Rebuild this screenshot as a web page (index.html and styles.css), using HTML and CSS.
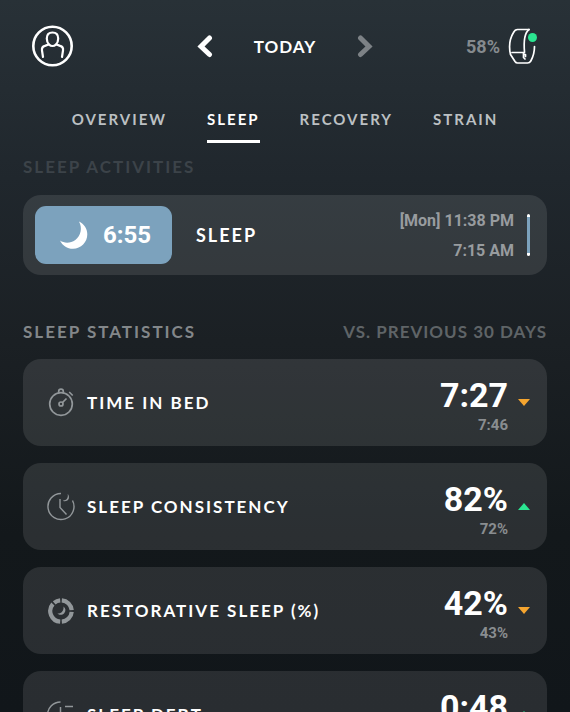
FILE: index.html
```html
<!DOCTYPE html>
<html lang="en">
<head>
  <meta charset="UTF-8" />
  <title>Sleep</title>
  <meta name="viewport" content="width=device-width, initial-scale=1.0" />
  <link rel="stylesheet" href="styles.css">
</head>
<body>

  <header class="topbar">
    <button class="icon-btn profile" aria-label="Profile">
      <svg width="42" height="42" viewBox="0 0 42 42" fill="none" stroke="#fff" stroke-linecap="round" stroke-linejoin="round">
        <circle cx="20.5" cy="21" r="19.2" stroke-width="2.6" />
        <path stroke-width="2.2" d="M20.5 7.500c-3.700 0-5.700 2.500-5.700 6 0 2.700.8 4.700 2.300 6.100 1.900 1.700 4.900 1.700 6.800 0 1.500-1.400 2.300-3.400 2.300-6.100 0-3.500-2-6-5.700-6z" />
        <path stroke-width="2.200" d="M11 32l-1-6.500c-.4-2.600.8-4 2.900-4.600l3.600-1.400M30 32l1-6.500c.4-2.600-.8-4-2.900-4.600l-3.600-1.400" />
      </svg>
    </button>

    <div class="day">
      <button class="icon-btn" aria-label="Previous day">
        <svg width="16" height="24" viewBox="0 0 16 24" fill="none" stroke="#fff" stroke-width="5" stroke-linecap="round">
          <path d="M12.500 4L4 12.500l8.500 8" />
        </svg>
      </button>
      <span class="day-name">TODAY</span>
      <button class="icon-btn" aria-label="Next day">
        <svg width="16" height="24" viewBox="0 0 16 24" fill="none" stroke="#7d8286" stroke-width="5" stroke-linecap="round">
          <path d="M3.500 4l8.500 8.500-8.500 8" />
        </svg>
      </button>
    </div>

    <div class="device">
      <span class="battery">58%</span>
      <svg width="30" height="38" viewBox="0 0 30 38" fill="none" stroke="#fff" stroke-width="1.700" stroke-linecap="round" stroke-linejoin="round">
        <path d="M21 2.500H9.500C7.500 2.500 6.500 3.500 5.500 5.500 1.500 12 .8 20 2.500 27.500L7 34.500c.7 1 1.200 1.500 2.500 1.500h10c1.500 0 2.500-.5 3.300-2 2.500-4.500 3.700-9 3.700-14.500" />
        <path d="M21 2.500c-4 3-5.500 11-4.500 22.500M4 25.500h12.500M15.500 26v4.500l1.500 1.500M16.500 27.500h1v2" />
        <circle cx="24.500" cy="10.500" r="4.500" fill="#2be591" stroke="none" />
      </svg>
    </div>
  </header>

  <nav class="tabs">
    <a class="tab" href="#overview">OVERVIEW</a>
    <a class="tab active" href="#sleep">SLEEP</a>
    <a class="tab" href="#recovery">RECOVERY</a>
    <a class="tab" href="#strain">STRAIN</a>
  </nav>

  <main class="content">
    <h2 class="section-title faded">SLEEP ACTIVITIES</h2>

    <div class="card activity">
      <div class="duration">
        <svg width="30" height="30" viewBox="0 0 30 30" fill="#fff">
          <path d="M20 1.500c5.200 2.300 8.300 7.400 8.300 12.800 0 8-6.300 14.500-14.300 14.500-5.800 0-10.700-3.200-13-8.300 4.300 3 10.500 2.900 15.300-.6 5.600-4.100 7.300-11.900 3.700-18.400z" />
        </svg>
        <span>6:55</span>
      </div>
      <span class="activity-name">SLEEP</span>
      <div class="times">
        <span>[Mon] 11:38 PM</span>
        <span>7:15 AM</span>
      </div>
      <div class="range"></div>
    </div>

    <div class="section-head">
      <h2 class="section-title">SLEEP STATISTICS</h2>
      <span class="section-note">VS. PREVIOUS 30 DAYS</span>
    </div>

    <div class="stats">
      <div class="card stat">
        <svg class="stat-icon" width="28" height="30" viewBox="0 0 28 30" fill="none" stroke="#92979a" stroke-width="1.700">
          <circle cx="14" cy="16" r="11.300" />
          <path d="M11.700 4.500v-1a2.300 2.300 0 0 1 4.600 0v1M22.200 4l3.500 3.500M15.500 14.500l4-4" />
          <circle cx="14" cy="16" r="2" />
        </svg>
        <span class="stat-name">TIME IN BED</span>
        <div class="stat-values">
          <span class="now">7:27</span>
          <span class="before">7:46</span>
        </div>
        <span class="trend down"></span>
      </div>

      <div class="card stat">
        <svg class="stat-icon" width="28" height="30" viewBox="0 0 28 30" fill="none" stroke="#92979a" stroke-width="1.400">
          <path d="M14 1.500a13 13 0 1 0 11.500 7" />
          <path d="M13 7v8.500l6.500 7" />
          <path fill="#92979a" stroke="none" d="M20.700 2c2 2.200 1.700 5.500-.8 6.800-1.600.8-3 .6-4.200-.4 3.500.3 5.700-2.200 5-6.400z" />
        </svg>
        <span class="stat-name">SLEEP CONSISTENCY</span>
        <div class="stat-values">
          <span class="now">82%</span>
          <span class="before">72%</span>
        </div>
        <span class="trend up"></span>
      </div>

      <div class="card stat">
        <svg class="stat-icon" width="28" height="30" viewBox="0 0 28 30" fill="none" stroke="#92979a" stroke-width="4.200">
          <path d="M14.800 4.300A10.700 10.700 0 0 1 24.700 14.200M24.700 15.800A10.700 10.700 0 0 1 14.800 25.700M13.200 25.700A10.700 10.700 0 0 1 5.900 8M7.200 6.800A10.700 10.700 0 0 1 13.200 4.300" />
          <path fill="#92979a" stroke="none" d="M16.500 10.500c2.300 1.600 2.600 4.700.7 6.800-1.900 2-4.900 2.100-6.800.2 4 .2 6.600-2.700 6.100-7z" />
        </svg>
        <span class="stat-name">RESTORATIVE SLEEP (%)</span>
        <div class="stat-values">
          <span class="now">42%</span>
          <span class="before">43%</span>
        </div>
        <span class="trend down"></span>
      </div>

      <div class="card stat">
        <svg class="stat-icon" width="28" height="30" viewBox="0 0 28 30" fill="none" stroke="#92979a" stroke-width="1.500">
          <path d="M13.500 2a13 13 0 1 0 13 13M13.500 7v9M18 6.500h8" />
        </svg>
        <span class="stat-name">SLEEP DEBT</span>
        <div class="stat-values">
          <span class="now">0:48</span>
        </div>
        <span class="trend up"></span>
      </div>
    </div>
  </main>

</body>
</html>
```

FILE: styles.css
```css
* { box-sizing: border-box; }
body {
  background: linear-gradient(#283137, #20272d 25%, #1b2024 48%, #13181b 75%, #11161a);
  color: #fff;
  font-family: Lato, "Open Sans", sans-serif;
  font-weight: bold;
  font-size: 17px;
  letter-spacing: 1px;
  margin: 0;
  height: 100vh;
  display: flex;
  flex-direction: column;
  overflow: hidden;
}
svg { display: block; }

/* top bar */
.topbar {
  display: grid;
  grid-template-columns: 1fr auto 1fr;
  align-items: center;
  height: 92px;
  padding: 0 32px;
  flex-shrink: 0;
}
.icon-btn {
  background: none;
  border: 0;
  padding: 0;
  cursor: pointer;
}
.profile { justify-self: start; }
.day {
  display: flex;
  align-items: center;
  gap: 41px;
}
.device {
  display: flex;
  align-items: center;
  justify-content: flex-end;
  gap: 8px;
}
.battery {
  font-family: Roboto, sans-serif;
  font-size: 18px;
  letter-spacing: 0;
  color: #858a8e;
}

/* tabs */
.tabs {
  display: flex;
  justify-content: center;
  gap: 40px;
  height: 51px;
  padding-top: 16px;
  flex-shrink: 0;
}
.tab {
  color: #bcc0c3;
  font-size: 15px;
  line-height: 22px;
  letter-spacing: 2px;
  text-decoration: none;
  border-bottom: 3px solid transparent;
  padding-bottom: 9px;
}
.tab.active {
  color: #fff;
  border-color: #fff;
}

/* scrolling part */
.content {
  flex: 1;
  min-height: 0;
  overflow-y: auto;
  scrollbar-width: none;
  padding: 12px 23px 24px;
}
.section-title {
  font-size: 17px;
  line-height: 24px;
  letter-spacing: 2px;
  margin: 0;
  color: #83878a;
}
.section-title.faded { color: #3c4349; }
.section-note {
  color: #5f6467;
  line-height: 24px;
}
.section-head {
  display: flex;
  justify-content: space-between;
  margin: 45px 0 15px;
}
.card {
  display: flex;
  align-items: center;
  background: rgba(255, 255, 255, 0.1);
  border-radius: 18px;
}

.activity {
  margin-top: 16px;
  min-height: 80px;
  padding: 11px 17px 11px 12px;
}
.duration {
  display: flex;
  align-items: center;
  justify-content: center;
  gap: 14px;
  width: 137px;
  height: 58px;
  padding-left: 3px;
  border-radius: 11px;
  background: #7ca2bd;
  font-family: Roboto, sans-serif;
  font-size: 24px;
  letter-spacing: 0;
}
.activity-name {
  flex: 1;
  margin-left: 24px;
  font-size: 18px;
  letter-spacing: 2px;
}
.times {
  display: flex;
  flex-direction: column;
  gap: 10px;
  padding-top: 2px;
  text-align: right;
  font-family: Roboto, sans-serif;
  font-size: 16px;
  line-height: 20px;
  letter-spacing: 0;
  color: #989c9f;
}
.range {
  width: 3px;
  height: 42px;
  margin-left: 13px;
  background: #7ca2bd;
  border: solid #fff;
  border-width: 3px 0;
  border-radius: 2px;
}

.stats {
  display: flex;
  flex-direction: column;
  gap: 17px;
}
.stat {
  height: 87px;
  padding: 0 17px 0 24px;
}
.stat-name {
  flex: 1;
  margin-left: 12px;
  letter-spacing: 2px;
}
.stat-values {
  align-self: flex-start;
  display: flex;
  flex-direction: column;
  text-align: right;
  padding-top: 16px;
  font-family: Roboto, sans-serif;
  letter-spacing: 0;
}
.now {
  font-size: 34px;
  line-height: 40px;
}
.before {
  font-size: 15px;
  line-height: 20px;
  color: #898d90;
}
.trend {
  margin-left: 10px;
  border: solid transparent;
  border-width: 0 6px;
}
.trend.down { border-top: 7px solid #f5a52f; }
.trend.up { border-bottom: 7px solid #2be591; }
```
